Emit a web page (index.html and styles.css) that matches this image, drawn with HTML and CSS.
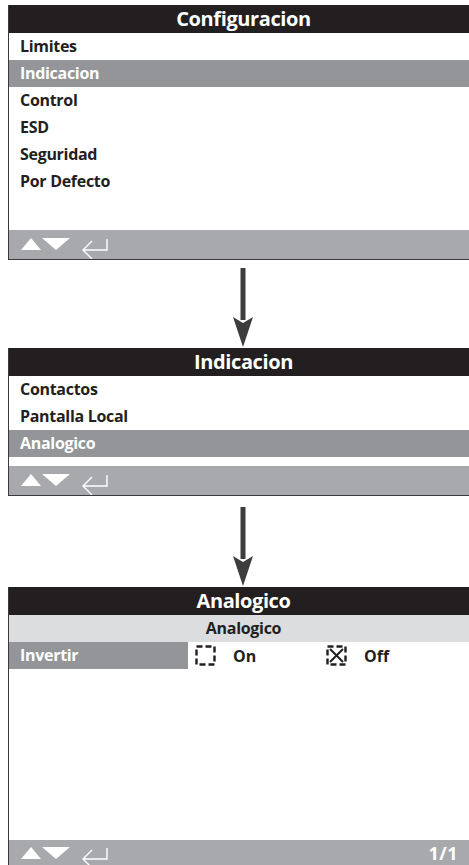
FILE: index.html
```html
<!DOCTYPE html>
<html lang="es">

<head>
    <meta charset="UTF-8">
    <meta name="viewport" content="width=device-width, initial-scale=1.0">
    <title>Configuracion</title>
    <link rel="stylesheet" href="styles.css">
</head>

<body>
    <div class="page">
        <!-- Menu principal -->
        <div class="screen">
            <div class="screen-title">Configuracion</div>
            <ul class="menu">
                <li>Limites</li>
                <li class="selected">Indicacion</li>
                <li>Control</li>
                <li>ESD</li>
                <li>Seguridad</li>
                <li>Por Defecto</li>
            </ul>
            <div class="spacer-menu"></div>
            <div class="footer">
                <svg class="nav-icons" width="92" height="24" viewBox="0 0 92 24">
                    <polygon points="11,3 21,15 1,15" fill="#fff" />
                    <polygon points="22,3 50,3 36,15" fill="#fff" />
                    <path d="M87 4 V15 H63 M72 6 L63 15 L72 24" fill="none" stroke="#fff" stroke-width="1.4" />
                </svg>
            </div>
        </div>

        <div class="arrow">
            <svg width="22" height="79" viewBox="0 0 22 79">
                <rect x="8.5" y="0" width="5" height="52" fill="#3d3d3d" />
                <polygon points="1,49 11,55 21,49 11,79" fill="#3d3d3d" />
            </svg>
        </div>

        <!-- Submenu indicacion -->
        <div class="screen">
            <div class="screen-title">Indicacion</div>
            <ul class="menu">
                <li>Contactos</li>
                <li>Pantalla Local</li>
                <li class="selected">Analogico</li>
            </ul>
            <div class="spacer-small"></div>
            <div class="footer">
                <svg class="nav-icons" width="92" height="24" viewBox="0 0 92 24">
                    <polygon points="11,3 21,15 1,15" fill="#fff" />
                    <polygon points="22,3 50,3 36,15" fill="#fff" />
                    <path d="M87 4 V15 H63 M72 6 L63 15 L72 24" fill="none" stroke="#fff" stroke-width="1.4" />
                </svg>
            </div>
        </div>

        <div class="arrow arrow-low">
            <svg width="22" height="79" viewBox="0 0 22 79">
                <rect x="8.5" y="0" width="5" height="52" fill="#3d3d3d" />
                <polygon points="1,49 11,55 21,49 11,79" fill="#3d3d3d" />
            </svg>
        </div>

        <!-- Ajuste analogico -->
        <div class="screen screen-last">
            <div class="screen-title">Analogico</div>
            <div class="sub-title">Analogico</div>
            <div class="option-row">
                <div class="option-label">Invertir</div>
                <div class="option-choice">
                    <svg class="checkbox" width="21" height="21" viewBox="0 0 21 21">
                        <rect x="1.5" y="1.5" width="18" height="18" fill="none" stroke="#231f20" stroke-width="2.4" stroke-dasharray="6 3" />
                    </svg>
                    <span>On</span>
                </div>
                <div class="option-choice">
                    <svg class="checkbox" width="21" height="21" viewBox="0 0 21 21">
                        <rect x="1.5" y="1.5" width="18" height="18" fill="none" stroke="#231f20" stroke-width="2.4" stroke-dasharray="6 3" />
                        <path d="M4 4 L17 17 M17 4 L4 17" stroke="#231f20" stroke-width="2" />
                    </svg>
                    <span>Off</span>
                </div>
            </div>
            <div class="spacer-page"></div>
            <div class="footer footer-last">
                <svg class="nav-icons" width="92" height="24" viewBox="0 0 92 24">
                    <polygon points="11,3 21,15 1,15" fill="#fff" />
                    <polygon points="22,3 50,3 36,15" fill="#fff" />
                    <path d="M87 4 V15 H63 M72 6 L63 15 L72 24" fill="none" stroke="#fff" stroke-width="1.4" />
                </svg>
                <span class="page-count">1/1</span>
            </div>
        </div>
    </div>
</body>

</html>
```

FILE: styles.css
```css
body {
    margin: 0;
    padding: 0;
    background-color: #ffffff;
    font-family: "Open Sans", "Noto Sans", Arial, sans-serif;
}

.page {
    padding: 5px 0 0 8px;
}

/* the display runs past the right edge of the picture, so titles are centred with an offset */
.screen {
    width: 461px;
    border-left: 1px solid #3a3a3a;
    border-bottom: 1px solid #3a3a3a;
    box-sizing: border-box;
    background: #ffffff;
}

.screen-last {
    border-bottom: none;
}

.screen-title {
    height: 28px;
    line-height: 28px;
    padding-left: 9px;
    background-color: #231f20;
    color: #ffffff;
    text-align: center;
    font-size: 20px;
    font-weight: 700;
    letter-spacing: -0.4px;
}

.menu {
    list-style: none;
    margin: 0;
    padding: 0;
}

.menu li {
    height: 27px;
    line-height: 27px;
    padding-left: 11px;
    font-size: 16px;
    font-weight: 700;
    letter-spacing: -0.3px;
    color: #231f20;
}

.menu li.selected {
    background-color: #939598;
    color: #ffffff;
}

.spacer-menu {
    height: 35px;
}

.spacer-small {
    height: 9px;
}

.spacer-page {
    height: 171px;
}

.footer {
    height: 29px;
    background-color: #a7a9ac;
    display: flex;
    align-items: center;
    justify-content: space-between;
    padding: 0 11px 0 11px;
}

.footer-last {
    height: 25px;
    align-items: flex-end;
}

.nav-icons {
    display: block;
    margin-top: 4px;
}

.footer-last .nav-icons {
    margin-bottom: -3px;
}

.page-count {
    color: #ffffff;
    font-size: 18px;
    line-height: 20px;
    font-weight: 700;
    letter-spacing: 0.5px;
    margin-bottom: 2px;
}

.arrow {
    width: 461px;
    padding-left: 9px;
    box-sizing: border-box;
    display: flex;
    justify-content: center;
    margin: 8px 0 1px;
}

.arrow svg {
    display: block;
}

.arrow-low {
    margin-top: 11px;
    margin-bottom: 1px;
}

.sub-title {
    height: 27px;
    line-height: 27px;
    padding-left: 9px;
    background-color: #dcddde;
    color: #231f20;
    text-align: center;
    font-size: 16px;
    font-weight: 700;
    letter-spacing: -0.3px;
}

.option-row {
    height: 27px;
    display: flex;
    align-items: center;
}

.option-label {
    width: 179px;
    height: 27px;
    line-height: 27px;
    padding-left: 11px;
    box-sizing: border-box;
    background-color: #939598;
    color: #ffffff;
    font-size: 16px;
    font-weight: 700;
    letter-spacing: -0.3px;
}

.option-choice {
    width: 124px;
    display: flex;
    align-items: center;
    gap: 17px;
    padding-left: 7px;
    font-size: 16px;
    font-weight: 700;
    color: #231f20;
}

.checkbox {
    display: block;
}
```
